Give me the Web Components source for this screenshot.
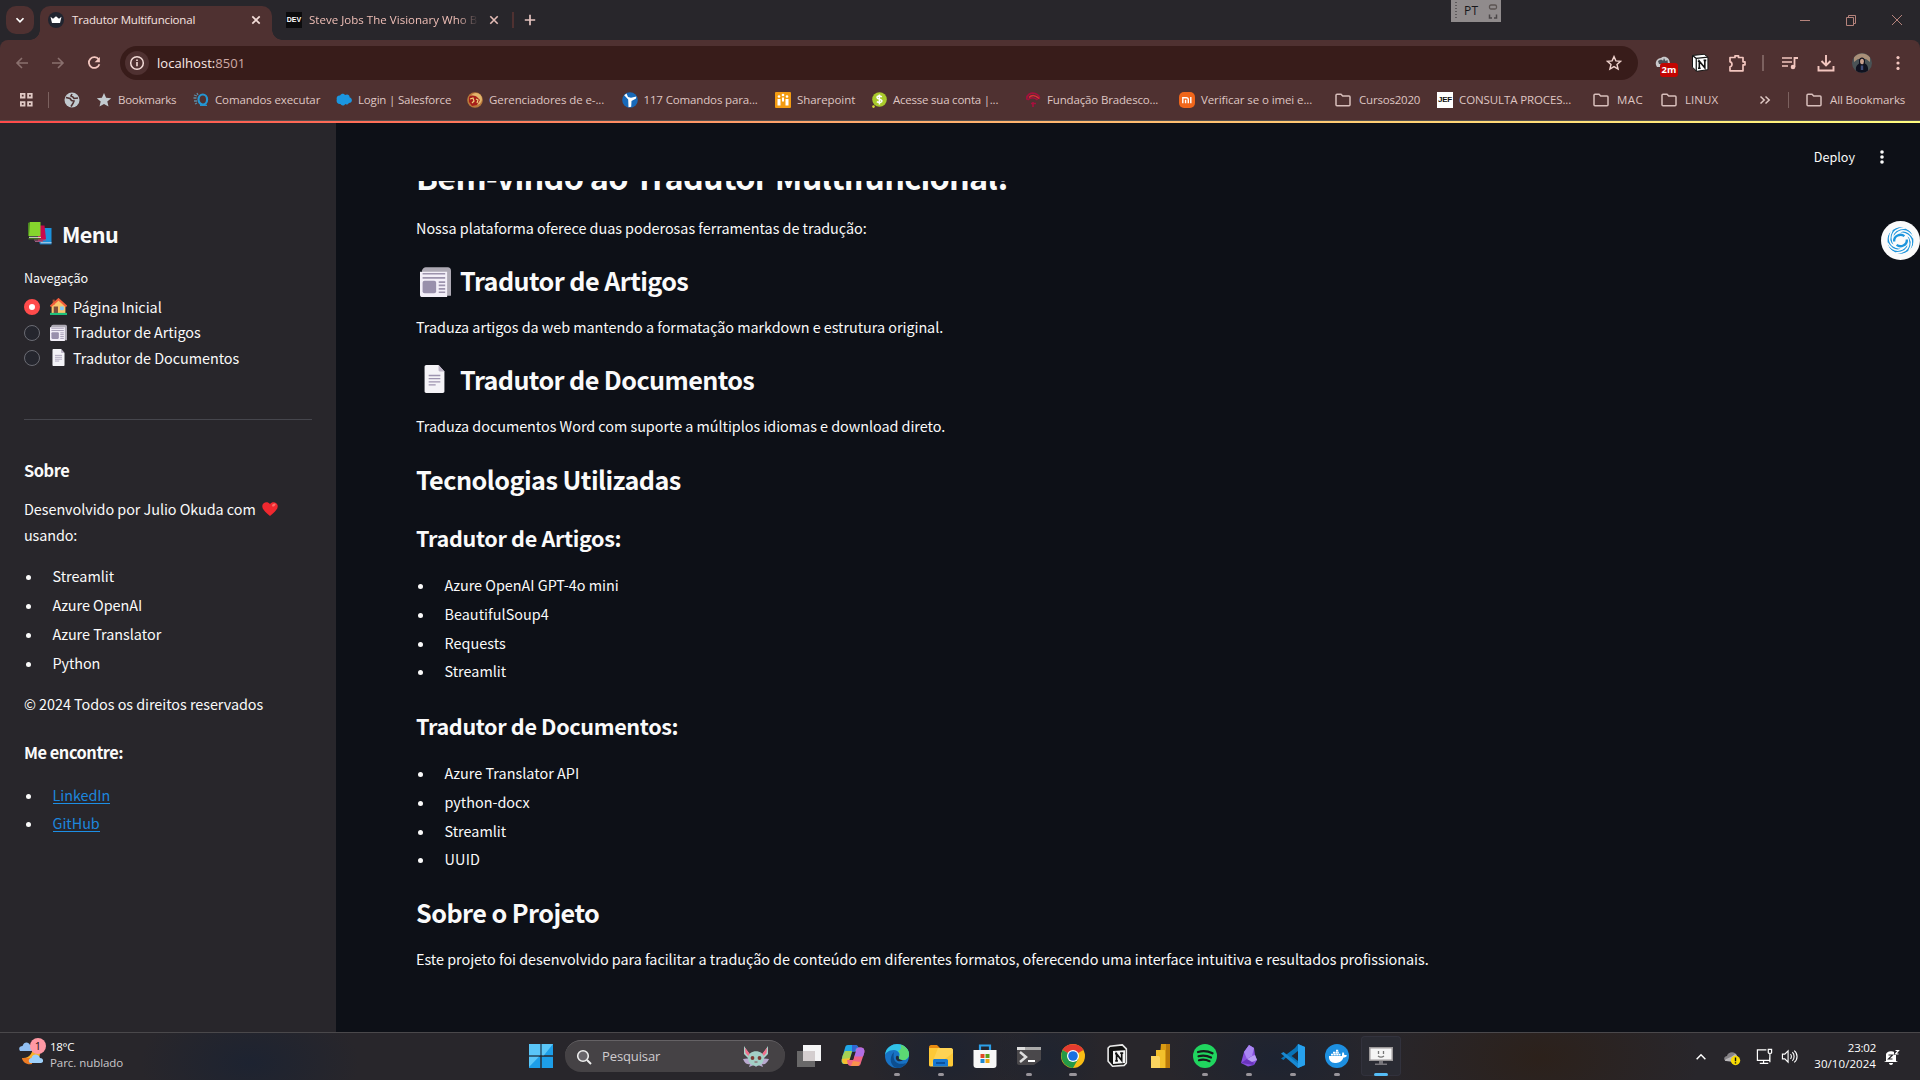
<!DOCTYPE html>
<html lang="pt-BR">
<head>
<meta charset="utf-8">
<title>Tradutor Multifuncional</title>
<style>
html,body{margin:0;width:1920px;height:1080px;overflow:hidden;background:#0d1017}
body{display:flex;flex-direction:column;font-family:"Open Sans","Noto Sans",sans-serif;color:#fafafa}
</style>
</head>
<body>
<browser-chrome></browser-chrome>
<app-view></app-view>
<task-bar></task-bar>
<lang-bar></lang-bar>
<script>
const BLADE='<path d="M5.500 17C7.500 8.500 17 4.500 25 7.500 18.500 7.500 11.500 10.500 10.500 19.500 10.200 22.500 11 25 12.500 27.500 7.500 26 5 21.500 5.500 17z"/><path d="M12.500 19.500C13 14 18 11 23.500 12.500 19.500 13.200 16.800 15.500 16.800 19.500 14.800 21 13.500 23 13.800 25.500 12.700 23.800 12.300 21.500 12.500 19.500z"/>';
const ICONS={
chev:['0 0 16 16','<path d="M4 6l4 4 4-4" fill="none" stroke="#fff" stroke-width="2"/>'],
crown:['0 0 16 16','<circle cx="8" cy="8" r="8" fill="#20242f"/><path d="M2.500 4.800l2.500 2L8 4.300 11 6.800l2.500-2-1.500 6.200H4z" fill="#fff"/>'],
close:['0 0 16 16','<path d="M4.300 4.300l7.400 7.400M11.700 4.300l-7.400 7.400" stroke="#f3dcd8" stroke-width="1.700"/>'],
close2:['0 0 16 16','<path d="M4.300 4.300l7.400 7.400M11.700 4.300l-7.400 7.400" stroke="#e5bdb7" stroke-width="1.600"/>'],
plus:['0 0 16 16','<path d="M8 2.800v10.400M2.800 8h10.400" stroke="#e5c4c0" stroke-width="1.700"/>'],
min:['0 0 16 16','<path d="M3 8.500h10" stroke="#b5837c"/>'],
max:['0 0 16 16','<path d="M3.500 5.500h7v8h-7zM5.500 5.500v-2h7v8h-2" fill="none" stroke="#b5837c"/>'],
winclose:['0 0 16 16','<path d="M3 3l10 10M13 3L3 13" stroke="#b5837c"/>'],
back:['0 0 16 16','<path d="M14 8H3M8 3L3 8l5 5" fill="none" stroke="#8a706e" stroke-width="1.600"/>'],
fwd:['0 0 16 16','<path d="M2 8h11M8 3l5 5-5 5" fill="none" stroke="#8a706e" stroke-width="1.600"/>'],
reload:['0 0 16 16','<path d="M12.800 4.600A5.400 5.400 0 1 0 13.400 9.200" fill="none" stroke="#f3c6bf" stroke-width="1.800"/><path d="M13.900 2v5.300H8.600z" fill="#f3c6bf"/>'],
info:['0 0 24 24','<circle cx="12" cy="12" r="12" fill="#4f3131"/><circle cx="12" cy="12" r="6.300" fill="none" stroke="#f3dcd8" stroke-width="1.500"/><path d="M12 11v4.200M12 8.400v1.600" stroke="#f3dcd8" stroke-width="1.600"/>'],
star:['0 0 16 16','<path d="M8 1.600l1.900 4.300 4.700.4-3.600 3.100 1.100 4.600L8 11.600 3.900 14l1.100-4.600L1.400 6.300l4.700-.4z" fill="none" stroke="#efd2cd" stroke-width="1.400"/>'],
starf:['0 0 16 16','<path d="M8 1l2.100 4.700 5.100.5-3.900 3.400 1.200 5L8 12l-4.500 2.600 1.200-5L.8 6.200l5.100-.5z" fill="#c3cbd0"/>'],
ext:['0 0 26 26','<path d="M2 14C1 10 4 7 7 7c3-3 9-1 9 6v3H3z" fill="#c9c9cb"/><path d="M4 10c2-1 4-2 5 0l1-3 1.500 3 2-1 .5 4H5z" fill="#4b4f55"/><rect x="6" y="12" width="18" height="14" rx="3" fill="#c10502"/>'],
notion:['0 0 24 24','<path d="M3 3l14-1.500L21.500 5v15L8 22l-5-5z" fill="#fff" stroke="#151515" stroke-width="1.200"/><path d="M3 3l4.500 3.500V22M7.500 6.500l14-1.500" fill="none" stroke="#151515" stroke-width="1.500"/><path d="M11.200 18.500V9.800l6.600 8V8.700M9.400 9.800h2.600M16.300 8.800h3.200M9.600 18.300h3.200" fill="none" stroke="#111" stroke-width="1.900"/>'],
notion2:['-1.500 -1.500 27 27','<path d="M4 1l14-1.500L22.500 4v16L20 22.500 7 23.500 2 18V3z" fill="#111" stroke="#e9e9e9" stroke-width="1.800" stroke-linejoin="round"/><path d="M7.500 6.500L21 5.500v14.500l-13.500 1z" fill="#f6f6f6"/><path d="M11.500 17.500V9.500l5.800 7.500V8.500M9.800 9.300h2.500M15.600 8.700h3.400M10 17.500h3" fill="none" stroke="#111" stroke-width="1.900"/>'],
puzzle:['0 0 20 20','<path d="M3 4.500h5V2.800h3.500v1.700H16v4.300h2v3h-2v6H3v-4c2.600-.3 2.600-4.700 0-5z" fill="none" stroke="#f3c6bf" stroke-width="1.700" stroke-linejoin="round"/>'],
music:['0 0 18 18','<path d="M1 4h10M1 8h10M1 12h6" stroke="#f3c6bf" stroke-width="1.600"/><circle cx="12" cy="13" r="2.300" fill="#f3c6bf"/><path d="M13.500 13V4H17" fill="none" stroke="#f3c6bf" stroke-width="1.800"/>'],
down:['0 0 18 18','<path d="M9 1v10M4.500 7L9 11.500 13.500 7M1.500 12v4.500h15V12" fill="none" stroke="#f3c6bf" stroke-width="1.900"/>'],
avatar:['0 0 20 20','<circle cx="10" cy="10" r="10" fill="#4a5356"/><path d="M2 4.500C6-1 14-1 18 4.500V9l-4-3H6L2 9z" fill="#a98f78"/><path d="M4 17.500C3.500 13 5.500 12 7 10.500V7c.5-3.500 5.500-3.500 6 0v3.500c2 1 3.500 3 3 7-3.500 3-9 3-12 0z" fill="#10121f"/><ellipse cx="10" cy="8.500" rx="1.900" ry="2.800" fill="#c9a18e"/><path d="M8.800 12.500h2.400V17H8.800z" fill="#3f4b78"/>'],
dots:['0 0 16 16','<g fill="#f3c6bf"><circle cx="8" cy="2.600" r="1.600"/><circle cx="8" cy="8" r="1.600"/><circle cx="8" cy="13.400" r="1.600"/></g>'],
dotsw:['0 0 16 16','<g fill="#fafafa"><circle cx="8" cy="3" r="1.800"/><circle cx="8" cy="8" r="1.800"/><circle cx="8" cy="13" r="1.800"/></g>'],
grid:['0 0 16 16','<g fill="none" stroke="#e0c9c5" stroke-width="1.800"><path d="M2.900 1.900h3.600v3.600h-3.600zM10.100 1.900h3.600v3.600h-3.600zM2.900 10.100h3.600v3.600h-3.600zM10.100 10.100h3.600v3.600h-3.600z"/></g>'],
globe:['0 0 16 16','<circle cx="8" cy="8" r="7.500" fill="#c1c9ce"/><path d="M2 5.500l4 1 1.500 2 2.500.5-1 2.500-2 3M8 2l-1 2 2 1 1 1.500 4-.5" fill="none" stroke="#4f3131" stroke-width="1.600"/>'],
cmd:['0 0 16 16','<ellipse cx="9.800" cy="7.500" rx="4.300" ry="5" fill="none" stroke="#2496d3" stroke-width="2.200"/><path d="M1 3l3 1M.5 6h3M1 9h3M2 12l2-1M4 1l1 2" stroke="#5f8aa5" stroke-width="1.300"/><path d="M7 13.300h7" stroke="#2496d3" stroke-width="1.300"/>'],
sf:['0 0 16 16','<path d="M4 3.500c1.500-2.500 4-2 5-.5 3-1.500 5 .5 4.500 2.200C17 6.500 16.600 11 12.800 11c-.8 1.800-2.800 1.800-3.600 1-1.300 2.300-4.200 1.600-4.700 0C1.500 12.500 0 10 .8 7.500 0 5 2 3 4 3.500z" fill="#1b96e0"/>'],
ger:['0 0 16 16','<circle cx="8" cy="8" r="7.800" fill="#b9783b"/><circle cx="9" cy="7" r="6" fill="#e2b66d"/><path d="M2 5c3-3 7-1 8 0l3 3-3 5-5 1-3-4z" fill="#a61f1a"/><path d="M3 7l3-1 1 3-2 2M9 7l2 1-1 3" fill="none" stroke="#f0cf7b" stroke-width="1.200"/>'],
k117:['0 0 16 16','<circle cx="8" cy="8" r="7.800" fill="#1769b9"/><path d="M2.200 3.200l4 4.300.3 7.800 2.700-.5.300-5.800 4.500-2.500.3-2L9 5.800 6 5 4.500 1.500z" fill="#fff"/>'],
sp:['0 0 16 16','<rect width="16" height="16" rx="1" fill="#f39b12"/><g fill="#fff"><circle cx="4" cy="4.500" r="1.300"/><circle cx="8" cy="3" r="1.300"/><circle cx="12" cy="4.500" r="1.300"/><path d="M2.500 7h3v6.500h-3zM7 5.500h2V9L8 10 7 9zM10.500 7h3v6.500h-3z"/></g>'],
ac:['0 0 16 16','<circle cx="8.500" cy="7.500" r="7.300" fill="#a9ca2c"/><circle cx="2.500" cy="14.600" r="1.300" fill="#d5db38"/><path d="M10.800 4.800c-2-1.500-5-.8-4.800.8.200 2 4.800 1.300 5 3.300.1 1.800-3 2.300-5.200.8M8.400 2.500v10" fill="none" stroke="#fff" stroke-width="1.500"/>'],
fund:['0 0 16 16','<path d="M2 7.500C1 3 6 0 10 1.500c4 1.500 5 4 4 5.500M2.500 8c3-3 7-3 10 0M8 10v5M6 11.500h5" fill="none" stroke="#a5103d" stroke-width="1.700"/><path d="M4 5.500c3-3 7-2 10 1" fill="none" stroke="#d93034" stroke-width="1.700"/>'],
mi:['0 0 16 16','<rect width="16" height="16" rx="5" fill="#f0661b"/><path d="M3.800 11.200v-5.400h3.500c1.500 0 2 .8 2 2v3.400M6.600 7.700v3.500M11.800 5.100v6.100" fill="none" stroke="#fff" stroke-width="1.400"/>'],
folder:['0 0 16 16','<path d="M1 3.200c0-.6.400-1 1-1h4l1.700 1.800H14c.6 0 1 .4 1 1v7.800c0 .6-.4 1-1 1H2c-.6 0-1-.4-1-1z" fill="none" stroke="#d8bebb" stroke-width="1.500"/>'],
more:['0 0 16 16','<path d="M3.500 4.500l3.700 3.500-3.700 3.500M8.500 4.500l3.700 3.500-3.700 3.500" fill="none" stroke="#e0c9c5" stroke-width="1.500"/>'],
books:['0 0 24 24','<path d="M12 6h11.500v14.500H12z" fill="#1b91dc"/><path d="M11 20h12.500v2.500H12z" fill="#1270b4"/><path d="M12.500 20.800h11" stroke="#d0e8f8"/><path d="M10 3.500h6.500L18 17l-4 2H10z" fill="#c9094b"/><path d="M6 18h12M7 19.500h8" stroke="#9c5c80" stroke-width="1.200"/><path d="M0 1l2-1v14H0z" fill="#4b8720"/><path d="M2 0h10.500v14H1z" fill="#86d52d"/><path d="M1 15.300h12" stroke="#e8f4d9"/><path d="M.5 16.700H12.500" stroke="#45701e" stroke-width="1.300"/>'],
house:['0 0 16 16','<path d="M1.500 15V7L8 1l6.500 6v8z" fill="#f9c56c"/><path d="M2.500 1.500h2V6h-2z" fill="#a74c30"/><path d="M.5 8L8 1.200 15.500 8" fill="none" stroke="#f25d3c" stroke-width="2"/><path d="M3.500 8h4v7h-4z" fill="#7c4b3a"/><rect x="9.500" y="8" width="3.500" height="3.500" fill="#80c9f8"/><path d="M0 15h16" stroke="#1dc17c" stroke-width="2"/>'],
news:['0 0 24 24','<path d="M1.500 3.500C2 2 3 1 4.500 1H21.500c1.500 0 2.500 1 2.500 2.500V23H3z" fill="#aeaab5"/><path d="M0 4.500h21V24H2C.5 24 0 23.500 0 22z" fill="#f3eff8"/><path d="M2 6h17.500M2 9.200h17.500M14.500 12.500h5M14.500 15h5M14.500 17.700h5M14.500 20.300h5" stroke="#9d94ad" stroke-width="1.200"/><rect x="2" y="11.500" width="10.500" height="9.500" rx="1.500" fill="#9990ac"/>'],
doc:['0 0 24 24','<path d="M3.500 1.500C3.500.7 4 0 5 0h10.500l5 5.500v17c0 .8-.5 1.500-1.500 1.500H5c-1 0-1.500-.7-1.500-1.500z" fill="#f4f3f7"/><path d="M15.500 0v4.500c0 .6.400 1 1 1h4z" fill="#bdb5c7"/><path d="M7 9h10M7 11.700h10M7 14.400h10M7 17h6" stroke="#9d94b0" stroke-width="1.100"/>'],
heart:['0 0 16 16','<path d="M8 15C3 11 0 8 .3 4.700.8 1 5.800-.2 8 3.200 10.200-.2 15.200 1 15.700 4.700 16 8 13 11 8 15z" fill="#f0282f"/><ellipse cx="11.800" cy="4" rx="2" ry="1.200" transform="rotate(-35 11.800 4)" fill="#fa6d68"/>'],
swirl:['0 0 40 40','<circle cx="20" cy="20" r="20" fill="#fbfbfb"/><g fill="#1d95dd">'+[0,60,120,180,240,300].map(a=>`<g transform="rotate(${a} 20 20)"><path d="M7.200 16C9.500 9 17 5.200 24.500 7.400 18.500 7.800 13.500 10.300 11.800 15.300 10.700 18.500 11.500 21.500 13 24 8.500 22.500 6.200 19.500 7.200 16z"/></g>`).join('')+'</g><g fill="none" stroke="#fbfbfb" stroke-width="1.500">'+[0,60,120,180,240,300].map(a=>`<path transform="rotate(${a} 20 20)" d="M25 7.200C17 7.500 12 11 11.500 17 11.500 21 13.500 24 16 25"/>`).join('')+'</g><g fill="none" stroke="#1d95dd" stroke-width="2.400"><path d="M13.500 21C13 15 20 12.500 24 15.500M26.500 19C27 25 20 27.500 16 24.500"/></g><circle cx="20" cy="20" r="2.800" fill="#fbfbfb"/>'],
weather:['0 0 24 24','<path d="M14 2c9 6 9 14 2 19-6 3-11 1-13-4 7 1 12-5 11-15z" fill="#fbae29"/><path d="M3 17h10v6c-5 1-9-1-10-6z" fill="#ed7b23"/><path d="M1 10C-1 7 1 5 3.500 5 5 0 10 1 11 4c4 0 4 6 1 6z" fill="#91bff3"/><path d="M11 22c-2-1-1.500-5 1.500-5C14 12 20 13 21 17c4 0 4 5 1 5z" fill="#9ed0fa"/>'],
win:['0 0 24 24','<path d="M0 0h11.300v11.300H0zM12.700 0H24v11.300H12.700zM0 12.700h11.300V24H0zM12.700 12.700H24V24H12.700z" fill="#1d9ee8"/><path d="M0 0h11.300v11.300H0zM12.700 0H24l-9 11.300h-2.300zM0 12.700h10L0 23z" fill="#5ac6f8"/>'],
search:['0 0 16 16','<circle cx="7" cy="7" r="5.300" fill="#68656a" stroke="#eee" stroke-width="1.600"/><path d="M11 11l4 4" stroke="#eee" stroke-width="2"/>'],
bat:['0 0 26 22','<path d="M8 12L0 13c2 5 5 6 7 5l-1 3 5-2 2 2 2-2 5 2-1-3c3 1 5-1 7-5l-8-1z" fill="#b9a9cf"/><path d="M7 9L1 0v8l5 5M19 9l6-9v8l-5 5" fill="#a9d4cb"/><path d="M7 8L1.800 1.500 2.500 7 6 11zM19 8l5.200-6.500L23.500 7 20 11z" fill="#f0708c"/><path d="M5 12C5 3 21 3 21 12c0 4-3 8-8 8s-8-4-8-8z" fill="#a3cfc6"/><circle cx="9.500" cy="12" r="1.900" fill="#7c3a33"/><circle cx="16.500" cy="12" r="1.900" fill="#7c3a33"/><path d="M11.500 16h3" stroke="#824750"/>'],
task:['0 0 24 24','<path d="M6 1h18v16H6z" fill="#f5f5f6"/><path d="M0 7h18v16H0z" fill="#777" opacity=".82"/><path d="M6 7h12v10H6z" fill="#d4cecf"/>'],
copilot:['0 0 24 24','<path d="M7 1h7c2 0 3 1 3.500 3l1 4h-6L9 18c-.5 1-1 2-3 2H4c-3 0-4-2-3-6L4 4c.5-2 1-3 3-3z" fill="#20a7e8"/><path d="M1.500 12L4 7h7l-2 11c-.5 2-2 2-3 2H4c-3 0-4-2-3-5z" fill="#a6d153"/><path d="M.8 15l9-1-1 4c-1 2-2 2-4 2s-4-2-4-5z" fill="#f8bf2f"/><path d="M17 22h-7c-2 0-3-1-3.500-3l-.5-3h6L15 6c.5-2 1.500-2.500 3-2.500h2c3 0 4 3 3 6l-3 9c-.5 2-1 3.500-3 3.500z" fill="#ef6584"/><path d="M15 6c1-2 2-2.500 3-2.500h2c3 0 4 3 3 6l-1 3h-9z" fill="#b06ee4"/><path d="M12 17l7 1c-.5 2-1 4-3 4h-6z" fill="#f9924d"/><path d="M11.300 7.500h3.500L12 16H8.500z" fill="#28262b"/><path d="M11 1h3c2 0 3 1 3.500 2.600-2-.5-3 .8-3.500 3.900h-3z" fill="#3166d4"/>'],
edge:['0 0 24 24','<circle cx="12" cy="12" r="12" fill="#1872c4"/><path d="M0 12C0 3 8 0 12 0c7 0 12 5 12 10 0 4-3 6-6 6-3 0-5-1-4-3 2-3-1-7-5-7C4 6 0 9 0 12z" fill="#31c3e8"/><path d="M15 .4C21 2 24 6 24 10c0 4-3 6-6 6-3 0-5-1-4-3 2-3 0-5-1-6 3-1 4-4 2-6.600z" fill="#5cd873"/><path d="M9 8c-2 9 3 14 12 11-2 4-6 5-9 5C6 23 3 14 9 8z" fill="#0c4e90"/><path d="M14 13c-1 2 1 3 4 3-4 3-8 0-7-3 .5-1 1-2 3 0z" fill="#222a39"/>'],
files:['0 0 24 24','<path d="M0 3c0-1 1-2 2-2h6l3 3H0z" fill="#e88a10"/><path d="M0 4h22c1 0 2 1 2 2v15c0 1-1 1.500-2 1.500H2c-1 0-2-.5-2-1.500z" fill="#fdc937"/><path d="M9 4h13c1 0 2 1 2 2v3L6 22H2z" fill="#ffda68" opacity=".6"/><path d="M4 17c0-2 1-2 2-2h11c2 0 2 1 2 2v5.500H4z" fill="#1778d2"/><path d="M7 18h9v2H7z" fill="#0b509b"/>'],
store:['0 0 24 24','<path d="M7 7V1.500h10V7" fill="none" stroke="#2c9fe8" stroke-width="2.200"/><path d="M.5 6h23v15c0 2-1 3-3 3h-17c-2 0-3-1-3-3z" fill="#f7f7f7"/><path d="M7.500 10h4v4h-4z" fill="#e34825"/><path d="M12.500 10h4v4h-4z" fill="#5da01a"/><path d="M7.500 15h4v4h-4z" fill="#1b87d2"/><path d="M12.500 15h4v4h-4z" fill="#eda613"/>'],
term:['0 0 24 24','<path d="M0 3h24v13L17 21H2c-1 0-2-1-2-2z" fill="#4a484b"/><path d="M0 3h24v3H0z" fill="#aaa"/><path d="M0 3h8v3H0z" fill="#ddd"/><path d="M3 8l6 5-6 5" fill="none" stroke="#ddd" stroke-width="2.500"/><path d="M11 17h7" stroke="#fff" stroke-width="2"/>'],
chrome:['0 0 24 24','<circle cx="12" cy="12" r="12" fill="#f9bd15"/><path d="M12 12L1.600 6C5-1 18-2 22.400 6z" fill="#e43b2f"/><path d="M12 12L1.600 6C-2 13 2 23 12 24l5.200-9z" fill="#249a47"/><circle cx="12" cy="12" r="6" fill="#fff"/><circle cx="12" cy="12" r="4.800" fill="#1b6fe0"/>'],
pbi:['0 0 24 24','<path d="M12 0h9v24H10z" fill="#d99a12"/><path d="M17 0h4v24h-4z" fill="#b9790a"/><path d="M7 6h8c1 0 1 .5 1 1v17H7z" fill="#f3c02c"/><path d="M2 12h7c1 0 2 .5 2 2v10H2z" fill="#fbd560"/>'],
spot:['0 0 24 24','<circle cx="12" cy="12" r="12" fill="#20d55f"/><path d="M5 8c5-1.500 10-1 14.500 1.300M5.500 12.300c4.500-1.300 8.500-.8 12.500 1.200M6 16.200c4-1 7-.7 10.500 1" fill="none" stroke="#171c1b" stroke-width="2.200" stroke-linecap="round"/>'],
obs:['0 0 24 24','<path d="M12 1l5 3 1 7 2 5-3 5-6 1.500L4 19l3-11z" fill="#8851df"/><path d="M12 1l5 3-2 8-5 3L7 8z" fill="#a986f3"/><path d="M4 19l6-4 5-3 2 9z" fill="#6934bd"/><path d="M10 15l5-3 3-1 2 5-5 2z" fill="#b99df4"/>'],
vsc:['0 0 24 24','<path d="M17 0l7 3v18l-7 3L5.500 13 2.500 16 0 14.500 14 4z" fill="#0873b8"/><path d="M2.500 8L17 19.500V24L0 9.500z" fill="#1989d2"/><path d="M17 0l7 3v18l-7 3z" fill="#27a1ed"/><path d="M17 7v10l-6.500-5z" fill="#202735"/>'],
docker:['0 0 24 24','<circle cx="12" cy="12" r="12" fill="#1d8fe0"/><path d="M4 12h13c0-2 0-3 1-4 1 1 1.500 2 1.300 3 1 0 2 0 2.700.5-.5 1.500-2 2-3.500 2C17 18 13 19 10 19c-4 0-6.500-3-6-7z" fill="#fff"/><path d="M6 10.700h9.500M8 8.700h6M11 6.700h2.500" stroke="#fff" stroke-width="1.700" stroke-dasharray="2.200 .4"/>'],
screen:['0 0 24 24','<path d="M0 3h24v14H0z" fill="#9b9899"/><path d="M1.500 4.500h21v11h-21z" fill="#f5f5f5"/><path d="M9.500 7v3M14.500 7v3M9 12c2 1.500 4 1.500 6 0" fill="none" stroke="#777" stroke-width="1.300"/><path d="M10 17h4v2.500h4v1.500H6v-1.500h4z" fill="#77757a"/>'],
up:['0 0 16 16','<path d="M3 10.500l5-5 5 5" fill="none" stroke="#fff" stroke-width="1.700"/>'],
cloud:['0 0 18 16','<path d="M3 11C0 10 1 6 4 6c1-5 9-5 10 0l-6 6z" fill="#858286"/><path d="M2 11C2 8 7 9 12 4c3 1 3 6 0 7z" fill="#bab8bb"/><circle cx="12.500" cy="10.500" r="4.700" fill="#f9dc05"/><path d="M12.500 7.500v3.700M12.500 12.300v1.300" stroke="#111" stroke-width="1.400"/>'],
net:['0 0 18 18','<path d="M11 2H1.500v11h13v-3M4 16.300h9M8 13v3M13 1.500h3.500V5c0 1-3.500 1-3.500 0zM14.700 6v9" fill="none" stroke="#fff" stroke-width="1.300"/>'],
vol:['0 0 18 16','<path d="M1.500 5.500h2.500L7.500 2v12L4 10.500H1.500zM10 5.500c1.300 1 1.300 4 0 5M12 3.500c2.500 2 2.500 7 0 9M14 1.800c4 3 4 9.400 0 12.400" fill="none" stroke="#fff" stroke-width="1.200"/>'],
bell:['0 0 16 16','<path d="M2 12V6c0-5 10-5 10 0v6l2 1H0zM5 14h4c0 2.500-4 2.500-4 0z" fill="#fff"/><path d="M4.500 6h4l-4 4h4" fill="none" stroke="#28262b" stroke-width="1.200"/><path d="M10 0h6v6h-6z" fill="#28262b"/><path d="M11.500 1.500h3l-3 3.500h3" fill="none" stroke="#fff" stroke-width="1.200"/>']
};
/* <ui-icon name size>: inline SVG glyph */
customElements.define('ui-icon',class extends HTMLElement{
 connectedCallback(){
  if(this.shadowRoot)return;
  const [vb,body]=ICONS[this.getAttribute('name')];
  const w=this.getAttribute('size')||16,h=this.getAttribute('h')||w;
  this.attachShadow({mode:'open'}).innerHTML=`<style>:host{display:block;flex:none;width:${w}px;height:${h}px}svg{display:block}</style><svg width="${w}" height="${h}" viewBox="${vb}">${body}</svg>`;
 }});
/* <fit-text w>: tracks its text so that it spans w pixels */
customElements.define('fit-text',class extends HTMLElement{
 connectedCallback(){
  if(this.shadowRoot)return;
  this.attachShadow({mode:'open'}).innerHTML='<style>:host{display:inline-block;white-space:nowrap;flex:none}</style><slot></slot>';
  const w=+this.getAttribute('w')-.8,n=this.textContent.length;
  const m=this.getBoundingClientRect().width;
  this.style.letterSpacing=((w-m)/n).toFixed(4)+'px';
 }});
function define(name,html){
 const t=document.createElement('template');t.innerHTML=html;
 customElements.define(name,class extends HTMLElement{
  constructor(){super();this.attachShadow({mode:'open'}).append(t.content.cloneNode(true));}
 });
}
customElements.define('bookmark-item',class extends HTMLElement{
 connectedCallback(){
  if(this.shadowRoot)return;
  const i=this.getAttribute('icon'),label=this.textContent;
  const ic=i==='jef'?'<b>JEF</b>':`<ui-icon name="${i}"></ui-icon>`;
  this.attachShadow({mode:'open'}).innerHTML=`<style>:host{display:flex;flex:none;align-items:center;gap:${this.getAttribute('gap')||6}px;width:${this.getAttribute('pitch')}px;font-size:11.500px;line-height:16px;color:#dfc6c3}
  fit-text{margin-top:-1px}
  b{display:block;width:16px;height:16px;background:#fff;color:#111;font:bold 8px/16px "Liberation Sans",sans-serif;text-align:center;letter-spacing:-.3px}</style>${ic}<fit-text w="${this.getAttribute('w')}">${label}</fit-text>`;
  this.replaceChildren();
 }});
define('browser-tab',`<style>
:host{display:flex;align-items:center;height:34px;padding-bottom:6px!important;box-sizing:border-box;position:relative;font-size:11.500px;line-height:16px;color:#f0bfb7}
:host([active]){background:#4f3131;border-radius:10px 10px 0 0;color:#f6e3e0}
:host([active])::before,:host([active])::after{content:"";position:absolute;bottom:0;width:10px;height:10px}
:host([active])::before{left:-10px;background:radial-gradient(circle at 0 0,transparent 9.500px,#4f3131 10px)}
:host([active])::after{right:-10px;background:radial-gradient(circle at 100% 0,transparent 9.500px,#4f3131 10px)}
</style><slot></slot>`);
define('browser-chrome',`<style>
:host{display:flex;flex-direction:column;height:121px;flex:none;background:#28262b;box-sizing:border-box;border-bottom:1px solid #55504f}
.strip{display:flex;flex:none;height:40px;box-sizing:border-box;padding:6px 0 0 6px}
.dd{width:28px;height:28px;border-radius:10px;background:#4f3131;display:flex;align-items:center;justify-content:center;margin-right:6px}
.dev{width:16px;height:16px;background:#0b0b0d;color:#fff;font:bold 7px/16px "Liberation Sans",sans-serif;text-align:center}
.fade{-webkit-mask-image:linear-gradient(90deg,#000 88%,transparent 101%);mask-image:linear-gradient(90deg,#000 88%,transparent 101%)}
.bar{display:flex;flex:none;align-items:center;background:#4f3131;height:46px;border-radius:8px 8px 0 0;box-sizing:border-box}
.omni{display:flex;align-items:center;height:34px;width:1518px;border-radius:17px;background:#381c1a;box-sizing:border-box;padding:0 16px 0 5px;font-size:13px;line-height:18px;color:#fbeae8}
.marks{display:flex;flex:none;align-items:center;height:34px;background:#4f3131;box-sizing:border-box;padding:0 0 6px 18px}
.sep{width:1px;background:#7c615f;flex:none}
.badge{position:absolute;left:6px;top:12px;width:18px;text-align:center;font:bold 9.500px/13px "Open Sans",sans-serif;color:#fff}
.sp{flex:1}
</style>
<div class="strip"><div class="dd"><ui-icon name="chev" size="14"></ui-icon></div>
<browser-tab active style="width:232px;padding:0 8px"><ui-icon name="crown"></ui-icon><fit-text w="124" style="margin-left:8px">Tradutor Multifuncional</fit-text><span class="sp"></span><ui-icon name="close"></ui-icon></browser-tab>
<browser-tab style="width:240px;padding:0 10px 0 14px"><div class="dev">DEV</div><fit-text class="fade" w="169" style="margin-left:7px">Steve Jobs The Visionary Who B</fit-text><span class="sp"></span><ui-icon name="close2"></ui-icon></browser-tab>
<div class="sep" style="height:16px;margin-top:6px;width:2px;background:#4f3131"></div><ui-icon name="plus" style="margin:6px 0 0 8px"></ui-icon><div class="sp"></div>
<ui-icon name="min" style="margin:6px 30px 0 0"></ui-icon><ui-icon name="max" style="margin:6px 30px 0 0"></ui-icon><ui-icon name="winclose" style="margin:6px 15px 0 0"></ui-icon></div>
<div class="bar"><ui-icon name="back" style="margin-left:14px"></ui-icon><ui-icon name="fwd" style="margin-left:20px"></ui-icon><ui-icon name="reload" style="margin-left:20px"></ui-icon>
<div class="omni" style="margin-left:18px"><ui-icon name="info" size="24"></ui-icon><fit-text w="89" style="margin-left:8px">localhost:<span style="color:#cfa9a5">8501</span></fit-text><div class="sp"></div><ui-icon name="star"></ui-icon></div>
<div style="position:relative;margin:2px 0 0 16px;width:26px;height:26px"><ui-icon name="ext" size="26"></ui-icon><div class="badge">2m</div></div>
<ui-icon name="notion" size="20" style="margin-left:10px"></ui-icon><ui-icon name="puzzle" size="20" style="margin-left:17px"></ui-icon>
<div class="sep" style="height:16px;width:2px;margin-left:15px"></div><ui-icon name="music" size="18" style="margin-left:17px"></ui-icon><ui-icon name="down" size="18" style="margin-left:18px"></ui-icon><ui-icon name="avatar" size="20" style="margin-left:17px"></ui-icon><ui-icon name="dots" style="margin-left:18px"></ui-icon></div>
<div class="marks"><ui-icon name="grid"></ui-icon><div class="sep" style="height:16px;margin:0 15px 0 14px"></div><ui-icon name="globe" style="margin-right:16px"></ui-icon>
<bookmark-item icon="starf" pitch="97" w="59">Bookmarks</bookmark-item><bookmark-item icon="cmd" pitch="143" w="106">Comandos executar</bookmark-item><bookmark-item icon="sf" pitch="131" w="94">Login | Salesforce</bookmark-item><bookmark-item icon="ger" pitch="154.500" w="116">Gerenciadores de e-...</bookmark-item><bookmark-item icon="k117" pitch="153.500" w="115">117 Comandos para...</bookmark-item><bookmark-item icon="sp" pitch="96" w="59">Sharepoint</bookmark-item><bookmark-item icon="ac" pitch="154" w="106">Acesse sua conta |...</bookmark-item><bookmark-item icon="fund" pitch="154" w="112">Fundação Bradesco...</bookmark-item><bookmark-item icon="mi" pitch="156" w="112">Verificar se o imei e...</bookmark-item><bookmark-item icon="folder" gap="8" pitch="102" w="62">Cursos2020</bookmark-item><bookmark-item icon="jef" pitch="156" w="113">CONSULTA PROCES...</bookmark-item><bookmark-item icon="folder" gap="8" pitch="68" w="27">MAC</bookmark-item><bookmark-item icon="folder" gap="8" pitch="96" w="34">LINUX</bookmark-item><ui-icon name="more"></ui-icon><div class="sep" style="height:16px;margin:0 17px 0 15px"></div><bookmark-item icon="folder" gap="8" pitch="114" w="76">All Bookmarks</bookmark-item></div>`);
define('lang-bar',`<style>:host{position:absolute;left:1451px;top:0;width:50px;height:22px;background:#908b8c;display:flex;align-items:center;box-sizing:border-box;color:#17161a;font-size:12px;line-height:20px}
i{width:2px;height:18px;margin-left:4px;background:repeating-linear-gradient(#5d595b 0 1px,transparent 1px 3px)}fit-text{margin-left:7px}svg{margin-left:10px}</style><i></i><fit-text w="15">PT</fit-text><svg width="10" height="20" viewBox="0 0 10 20"><rect x="1.500" y="4" width="7" height="4" rx="1.500" fill="none" stroke="#5b5452" stroke-width="1.300"/><path d="M1.500 13.500v3.500h2.500M8.500 13.500v3.500H6" fill="none" stroke="#4b4748" stroke-width="1.500"/></svg>`);
/* Text rows shared by the sidebar and the main column */
const TYPE=`.h2,.h3,.h4,.h5,.p,.sm{display:flex;align-items:center;flex:none;white-space:nowrap}
.h2{font-size:32.400px;line-height:40px;height:40px;font-weight:700}.h3{font-size:25.200px;line-height:34px;height:34px;font-weight:700}
.h4{font-size:21.600px;line-height:30px;height:30px;font-weight:700}.h5{font-size:16.400px;line-height:24px;height:24px;font-weight:700}
.p{font-size:14.400px;line-height:26px;height:26px}.sm{font-size:12.600px;line-height:20px;height:20px}
.li::before{content:"";width:5px;height:5px;border-radius:50%;background:#fafafa;margin:3px 21.500px 0 2px}`;
define('app-sidebar',`<style>${TYPE}
:host{display:flex;flex-direction:column;flex:none;width:336px;box-sizing:border-box;padding:98px 24px 0;background:#28262b}
.r{height:25.600px}.r i{width:16px;height:16px;box-sizing:border-box;border-radius:50%;border:1px solid #6a6b73;background:#25262e;margin-right:10px;margin-top:1px}
.r.on i{border:5px solid #ff4b4b;background:#fff}.r ui-icon{margin-right:6px;width:17px}
hr{border:0;height:1px;margin:48px 0 0;background:#46464d;flex:none}a{color:#1d86dd;text-decoration:none;border-bottom:1px solid #1d8fe6;line-height:17px}
</style>
<div class="h4"><ui-icon name="books" size="24" style="margin:0 10px 0 4px"></ui-icon><fit-text w="57">Menu</fit-text></div>
<div class="sm" style="margin-top:19px"><fit-text w="65">Navegação</fit-text></div>
<div class="p r on" style="margin-top:6px"><i></i><ui-icon name="house" size="17"></ui-icon><fit-text w="89.500">Página Inicial</fit-text></div>
<div class="p r"><i></i><ui-icon name="news" size="17"></ui-icon><fit-text w="128.500">Tradutor de Artigos</fit-text></div>
<div class="p r"><i></i><ui-icon name="doc" size="17"></ui-icon><fit-text w="167">Tradutor de Documentos</fit-text></div>
<hr>
<div class="h5" style="margin-top:38px"><fit-text w="46">Sobre</fit-text></div>
<div class="p" style="margin-top:14px"><fit-text w="232.500">Desenvolvido por Julio Okuda com</fit-text><ui-icon name="heart" size="16" style="margin:0 0 0 6.300px"></ui-icon></div>
<div class="p"><fit-text w="54">usando:</fit-text></div>
<div class="p li" style="margin-top:15px"><fit-text w="62.500">Streamlit</fit-text></div>
<div class="p li" style="margin-top:3px"><fit-text w="90.500">Azure OpenAI</fit-text></div>
<div class="p li" style="margin-top:3px"><fit-text w="109.500">Azure Translator</fit-text></div>
<div class="p li" style="margin-top:3px"><fit-text w="48.500">Python</fit-text></div>
<div class="p" style="margin-top:15px"><fit-text w="240">© 2024 Todos os direitos reservados</fit-text></div>
<div class="h5" style="margin-top:23px"><fit-text w="100">Me encontre:</fit-text></div>
<div class="p li" style="margin-top:18px"><a><fit-text w="58.500">LinkedIn</fit-text></a></div>
<div class="p li" style="margin-top:2px"><a><fit-text w="48">GitHub</fit-text></a></div>`);
define('app-main',`<style>${TYPE}
:host{display:flex;flex-direction:column;flex:1;background:#0d1017}
header{display:flex;flex:none;align-items:center;justify-content:flex-end;height:60px;padding:12px 30px 0 0;box-sizing:border-box;font-size:12.600px;line-height:20px}
main{display:flex;flex-direction:column;flex:1;overflow:hidden;padding-left:80px}
main>:first-child{margin-top:-25px}
.f{position:absolute;left:1881px;top:100px}
</style>
<header><fit-text w="42" style="margin-right:19px">Deploy</fit-text><ui-icon name="dotsw"></ui-icon></header>
<main>
<div class="h2"><fit-text w="593">Bem-vindo ao Tradutor Multifuncional!</fit-text></div>
<div class="p" style="margin-top:19px"><fit-text w="451.500">Nossa plataforma oferece duas poderosas ferramentas de tradução:</fit-text></div>
<div class="h3" style="margin-top:22px"><ui-icon name="news" size="31" h="31" style="margin:2px 9px 0 4px"></ui-icon><fit-text w="229">Tradutor de Artigos</fit-text></div>
<div class="p" style="margin-top:17px"><fit-text w="528">Traduza artigos da web mantendo a formatação markdown e estrutura original.</fit-text></div>
<div class="h3" style="margin-top:22px"><ui-icon name="doc" size="31" h="28" style="margin:0 10px 0 3px"></ui-icon><fit-text w="295">Tradutor de Documentos</fit-text></div>
<div class="p" style="margin-top:17px"><fit-text w="530">Traduza documentos Word com suporte a múltiplos idiomas e download direto.</fit-text></div>
<div class="h3" style="margin-top:23px"><fit-text w="265.500">Tecnologias Utilizadas</fit-text></div>
<div class="h4" style="margin-top:27px"><fit-text w="206">Tradutor de Artigos:</fit-text></div>
<div class="p li" style="margin-top:19px"><fit-text w="175">Azure OpenAI GPT-4o mini</fit-text></div>
<div class="p li" style="margin-top:3px"><fit-text w="105">BeautifulSoup4</fit-text></div>
<div class="p li" style="margin-top:3px"><fit-text w="62">Requests</fit-text></div>
<div class="p li" style="margin-top:2px"><fit-text w="62.500">Streamlit</fit-text></div>
<div class="h4" style="margin-top:27px"><fit-text w="263">Tradutor de Documentos:</fit-text></div>
<div class="p li" style="margin-top:19px"><fit-text w="135.500">Azure Translator API</fit-text></div>
<div class="p li" style="margin-top:3px"><fit-text w="86">python-docx</fit-text></div>
<div class="p li" style="margin-top:3px"><fit-text w="62.500">Streamlit</fit-text></div>
<div class="p li" style="margin-top:2px"><fit-text w="36.500">UUID</fit-text></div>
<div class="h3" style="margin-top:23px"><fit-text w="184">Sobre o Projeto</fit-text></div>
<div class="p" style="margin-top:17px"><fit-text w="1013.500">Este projeto foi desenvolvido para facilitar a tradução de conteúdo em diferentes formatos, oferecendo uma interface intuitiva e resultados profissionais.</fit-text></div>
</main>
<ui-icon class="f" name="swirl" size="39"></ui-icon>`);
define('app-view',`<style>:host{display:flex;flex:none;height:911px;overflow:hidden;position:relative;font-family:"Noto Sans CJK SC","Noto Sans",sans-serif;color:#fafafa}
.deco{position:absolute;left:0;top:0;width:100%;height:2px;background:linear-gradient(90deg,#ff4b4b,#ff7a5c 25%,#ffa66c 42%,#ffc472 65%,#fffd80)}
</style><app-sidebar></app-sidebar><app-main></app-main><div class="deco"></div>`);
customElements.define('task-icon',class extends HTMLElement{
 connectedCallback(){
  if(this.shadowRoot)return;
  const a=this.hasAttribute('active'),r=this.hasAttribute('run');
  this.attachShadow({mode:'open'}).innerHTML=`<style>:host{display:flex;flex-direction:column;align-items:center;flex:none;width:40px;height:40px;margin:3px 2px 0;box-sizing:border-box;padding-top:8px;border-radius:4px;${a?'box-shadow:inset 0 0 0 1px #32323d;background:#2a2b33;':''}}
  i{width:${a?14:r&&this.getAttribute('run')==='w'?8:6}px;height:3px;border-radius:2px;margin-top:5px;background:${a?'#55bdf7':'#98949a'}}</style><ui-icon name="${this.getAttribute('icon')}" size="${this.getAttribute('size')||24}"></ui-icon>${a||r?'<i></i>':''}`;
 }});
define('task-bar',`<style>
:host{display:flex;flex:none;height:48px;box-sizing:border-box;border-top:1px solid #4a484b;background:radial-gradient(ellipse 110px 60px at 250px 30px,#1d2331,transparent),radial-gradient(ellipse 80px 60px at 945px 20px,#1d2331,transparent),radial-gradient(ellipse 55px 60px at 1048px 25px,#1f2430,transparent),radial-gradient(ellipse 110px 60px at 1275px 25px,#1d2331,transparent),radial-gradient(ellipse 160px 90px at 1540px 25px,#2c211b,transparent),#28262b;font-size:11.500px;line-height:16px;color:#fff}
.w{display:flex;width:510px;padding:8px 0 0 19px;box-sizing:border-box}
.b{position:absolute;left:30px;top:1038px;width:16px;height:16px;border-radius:50%;background:#ff99a4;color:#1c1214;text-align:center;font-size:11px}
.col{display:flex;flex-direction:column;align-items:flex-start;margin:-2px 0 0 7px}
.mid{display:flex;flex:1}
.s{display:flex;align-items:center;width:220px;height:32px;border-radius:16px;background:#454245;margin:7px 0 0 -2px;box-sizing:border-box;padding:0 16px 0 11px;font-size:13px;color:#cfcccf;border-top:1px solid #656265}
.tray{display:flex;align-items:center;padding-right:20px;height:47px}
</style>
<div class="w"><ui-icon name="weather" size="24"></ui-icon><div class="col"><fit-text w="25">18°C</fit-text><fit-text w="74" style="color:#cac7ca">Parc. nublado</fit-text></div></div><div class="b">1</div>
<div class="mid"><task-icon icon="win" style="width:62px;margin:3px -5px 0 0"></task-icon>
<div class="s"><ui-icon name="search"></ui-icon><fit-text w="59" style="margin:-2px 0 0 10px">Pesquisar</fit-text><span style="flex:1"></span><ui-icon name="bat" size="26" h="22"></ui-icon></div>
<task-icon icon="task" style="margin-left:4px"></task-icon><task-icon icon="copilot"></task-icon><task-icon icon="edge" run></task-icon><task-icon icon="files" run></task-icon><task-icon icon="store"></task-icon><task-icon icon="term" run></task-icon><task-icon icon="chrome" run="w"></task-icon><task-icon icon="notion2"></task-icon><task-icon icon="pbi"></task-icon><task-icon icon="spot" run></task-icon><task-icon icon="obs" run></task-icon><task-icon icon="vsc" run></task-icon><task-icon icon="docker" run></task-icon><task-icon icon="screen" active></task-icon></div>
<div class="tray"><ui-icon name="up" size="14"></ui-icon><ui-icon name="cloud" size="18" style="margin:2px 0 0 15px"></ui-icon><ui-icon name="net" size="17" style="margin-left:15px"></ui-icon><ui-icon name="vol" size="17" style="margin-left:8px"></ui-icon><div class="col" style="align-items:flex-end;margin:-2px 8px 0 16px"><fit-text w="29">23:02</fit-text><fit-text w="62.500">30/10/2024</fit-text></div><ui-icon name="bell" size="16"></ui-icon></div>`);
</script>
</body>
</html>
